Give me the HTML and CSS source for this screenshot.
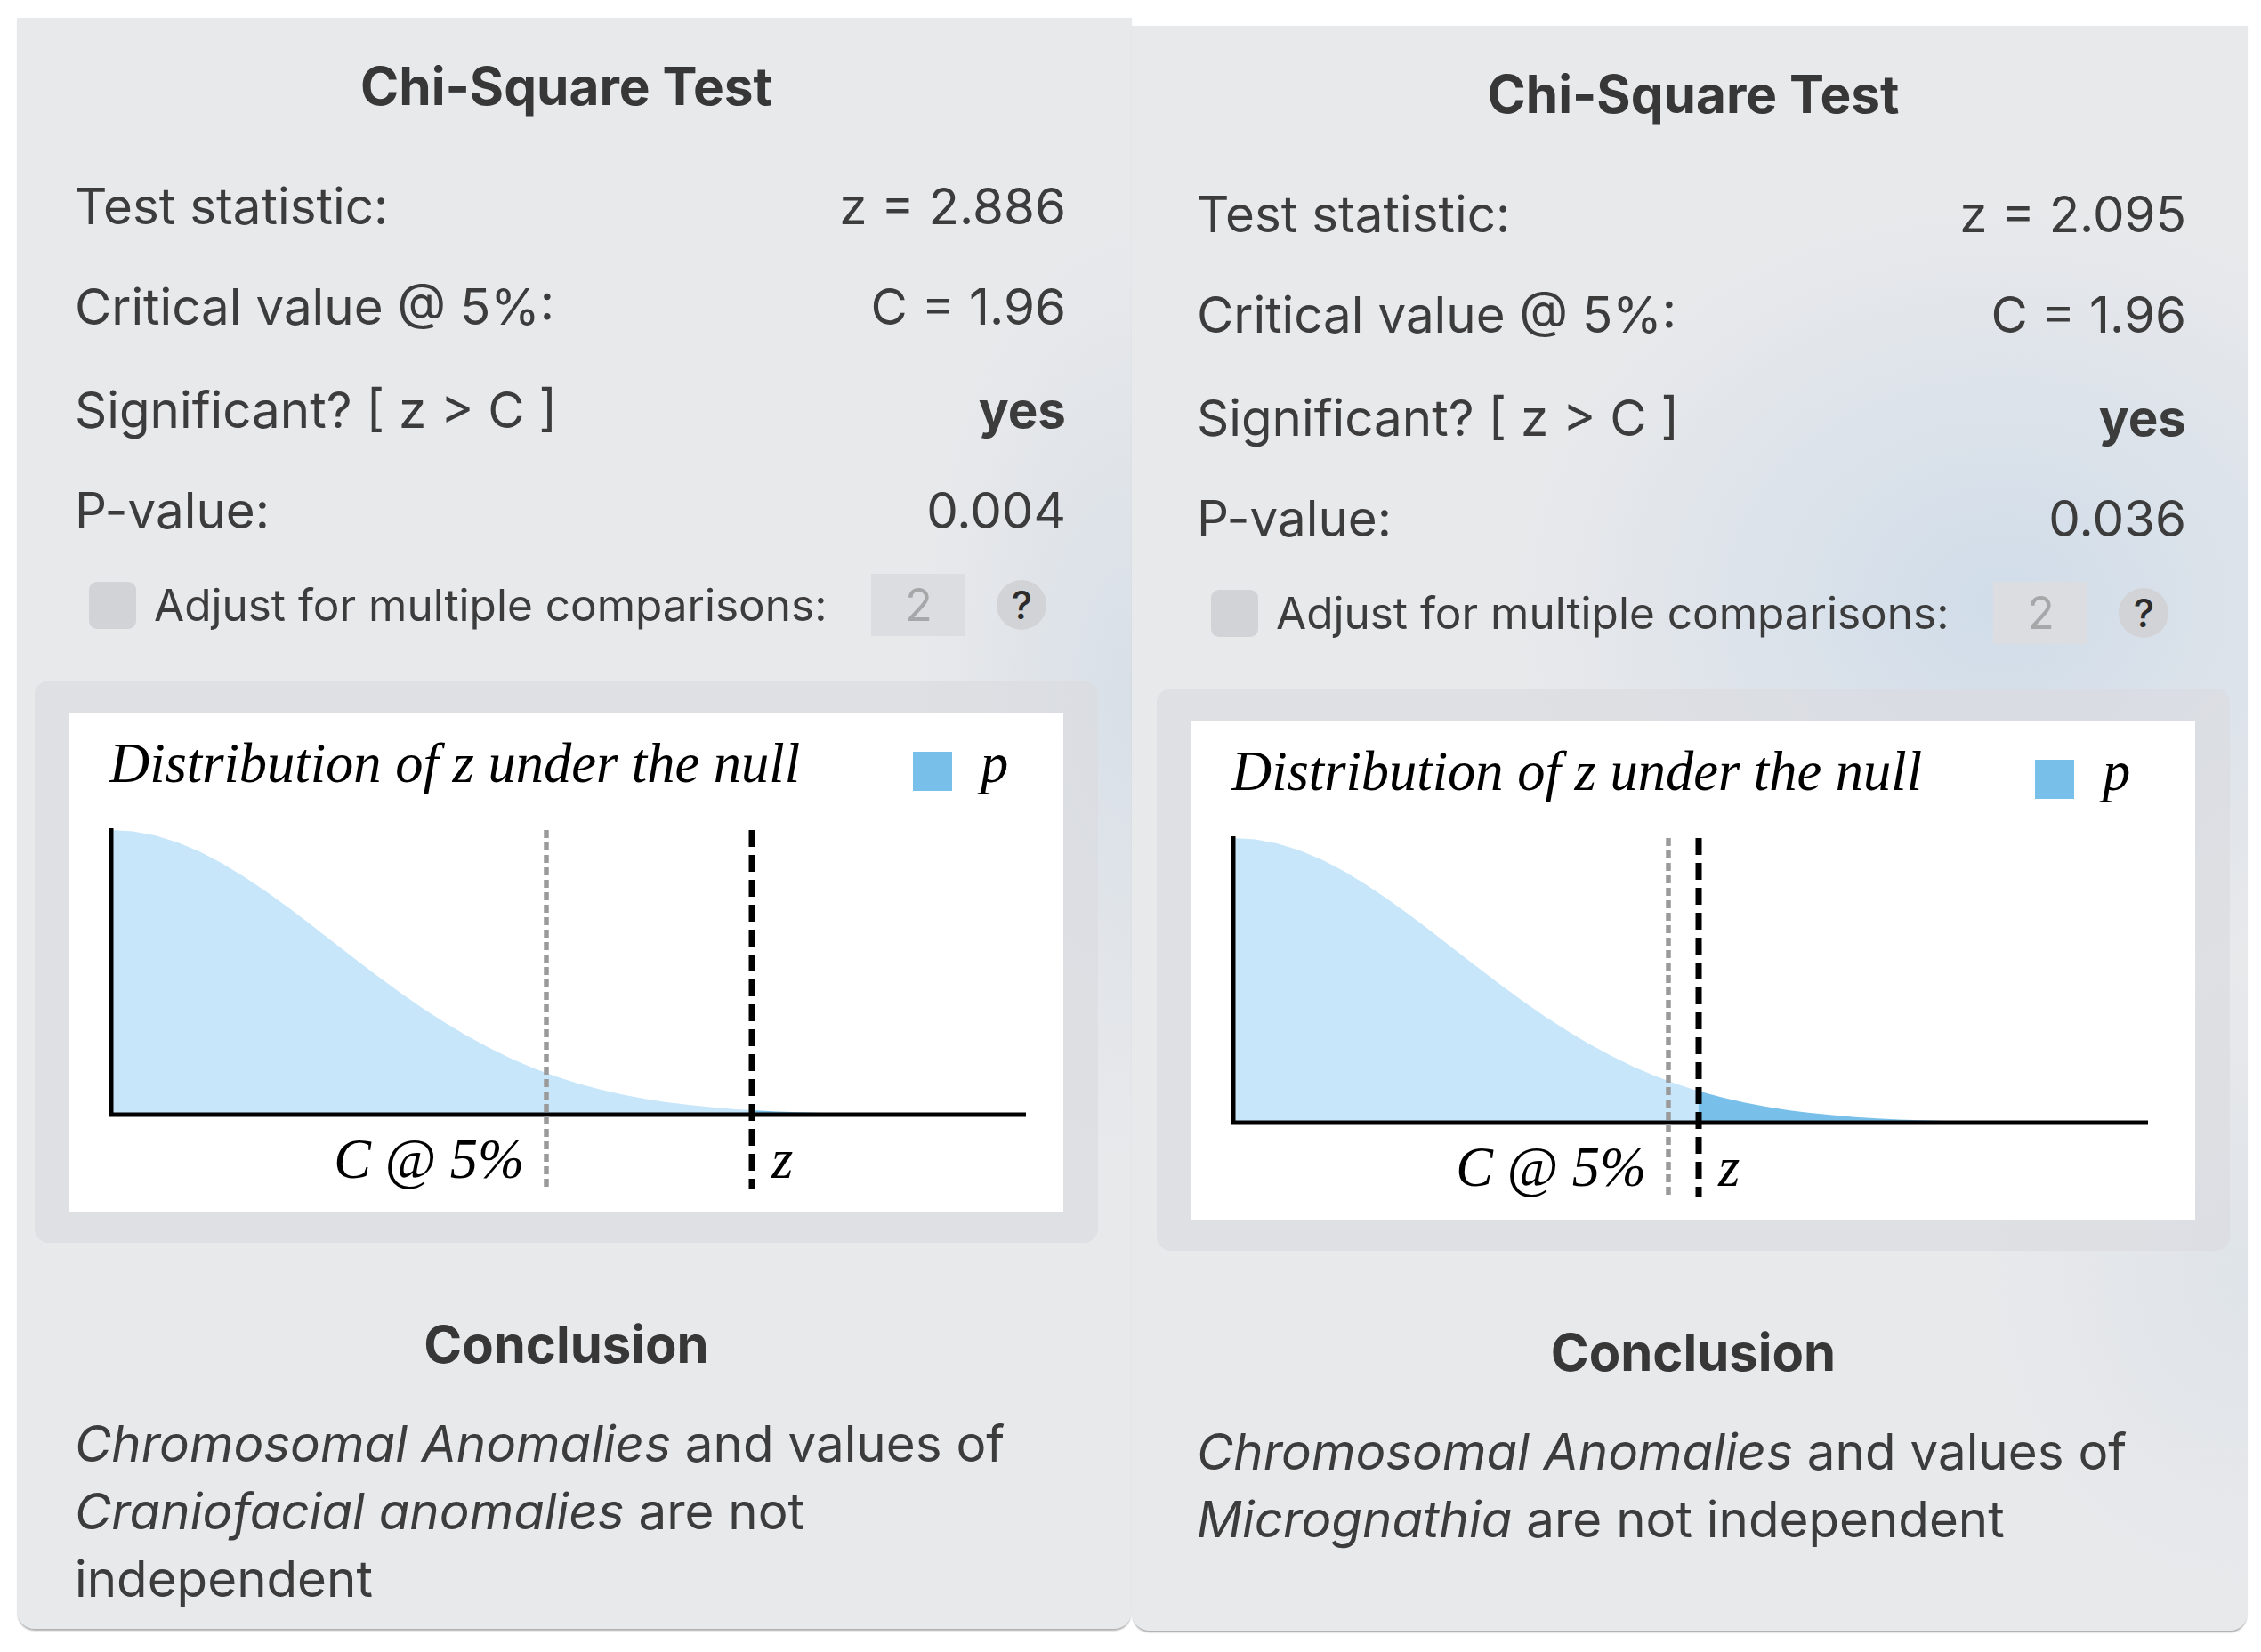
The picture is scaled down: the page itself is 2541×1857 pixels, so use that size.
FILE: index.html
```html
<!DOCTYPE html>
<html lang="en">
<head>
<meta charset="utf-8">
<title>Chi-Square Test</title>
<link rel="stylesheet" href="styles.css">
</head>
<body>
<div class="stage">
  <section class="panel panel--left">
    <h2 class="panel-title">Chi-Square Test</h2>
    <div class="stats">
      <div class="stat-row"><span>Test statistic:</span><span>z = 2.886</span></div>
      <div class="stat-row"><span>Critical value @ 5%:</span><span>C = 1.96</span></div>
      <div class="stat-row"><span>Significant? [ z &gt; C ]</span><span class="strong">yes</span></div>
      <div class="stat-row"><span>P-value:</span><span>0.004</span></div>
    </div>
    <div class="adjust-row">
      <span class="checkbox"></span>
      <span class="adjust-label">Adjust for multiple comparisons:</span>
      <span class="count-input">2</span>
      <span class="help">?</span>
    </div>
    <div class="chart-box">
      <div class="chart">
        <svg class="plot" width="1118" height="561" viewBox="0 0 1118 561">
          <text class="plot-title" x="45" y="78">Distribution of z under the null</text>
          <rect class="legend-swatch" x="948" y="44" width="44" height="44"/>
          <text class="plot-title" x="1024" y="78">p</text>
          <path class="area-null" d="M47,452 L47,132 L71.95,133.6 L96.9,138.3 L121.85,146.1 L146.8,156.6 L171.75,169.6 L196.7,184.7 L221.65,201.5 L246.6,219.6 L271.55,238.6 L296.5,257.9 L321.45,277.3 L346.4,296.2 L371.35,314.5 L396.3,331.9 L421.25,348.1 L446.2,363 L471.15,376.6 L496.1,388.7 L521.05,399.4 L546,408.7 L570.95,416.7 L595.9,423.5 L620.85,429.3 L645.8,434 L670.75,437.9 L695.7,441.1 L720.65,443.6 L745.6,445.7 L767.1,447 L767.1,452 Z"/>
          <path class="area-p" d="M767.1,452 L767.1,447 L770.55,447.2 L795.5,448.4 L845.4,450.1 L895.3,451 L945.2,451.5 L995.1,451.8 L1075,452 Z"/>
          <line class="axis" x1="47" y1="130" x2="47" y2="454"/>
          <line class="axis" x1="45" y1="452" x2="1075" y2="452"/>
          <line class="crit-line" x1="536" y1="132" x2="536" y2="535"/>
          <line class="z-line" x1="767" y1="132" x2="767" y2="535"/>
          <text class="plot-label" x="511" y="523" text-anchor="end">C @ 5%</text>
          <text class="plot-label" x="789" y="523">z</text>
        </svg>
      </div>
    </div>
    <h2 class="conclusion-title">Conclusion</h2>
    <p class="conclusion-text"><em>Chromosomal Anomalies</em> and values of <em>Craniofacial anomalies</em> are not independent</p>
  </section>

  <section class="panel panel--right">
    <h2 class="panel-title">Chi-Square Test</h2>
    <div class="stats">
      <div class="stat-row"><span>Test statistic:</span><span>z = 2.095</span></div>
      <div class="stat-row"><span>Critical value @ 5%:</span><span>C = 1.96</span></div>
      <div class="stat-row"><span>Significant? [ z &gt; C ]</span><span class="strong">yes</span></div>
      <div class="stat-row"><span>P-value:</span><span>0.036</span></div>
    </div>
    <div class="adjust-row">
      <span class="checkbox"></span>
      <span class="adjust-label">Adjust for multiple comparisons:</span>
      <span class="count-input">2</span>
      <span class="help">?</span>
    </div>
    <div class="chart-box">
      <div class="chart">
        <svg class="plot" width="1127" height="561" viewBox="0 0 1127 561">
          <text class="plot-title" x="45" y="78">Distribution of z under the null</text>
          <rect class="legend-swatch" x="948" y="44" width="44" height="44"/>
          <text class="plot-title" x="1024" y="78">p</text>
          <path class="area-null" d="M47,452 L47,132 L71.95,133.6 L96.9,138.3 L121.85,146.1 L146.8,156.6 L171.75,169.6 L196.7,184.7 L221.65,201.5 L246.6,219.6 L271.55,238.6 L296.5,257.9 L321.45,277.3 L346.4,296.2 L371.35,314.5 L396.3,331.9 L421.25,348.1 L446.2,363 L471.15,376.6 L496.1,388.7 L521.05,399.4 L546,408.7 L569.7,416.4 L569.7,452 Z"/>
          <path class="area-p" d="M569.7,452 L569.7,416.4 L570.95,416.7 L595.9,423.5 L620.85,429.3 L645.8,434 L670.75,437.9 L695.7,441.1 L720.65,443.6 L745.6,445.7 L770.55,447.2 L795.5,448.4 L845.4,450.1 L895.3,451 L945.2,451.5 L995.1,451.8 L1075,452 Z"/>
          <line class="axis" x1="47" y1="130" x2="47" y2="454"/>
          <line class="axis" x1="45" y1="452" x2="1075" y2="452"/>
          <line class="crit-line" x1="536" y1="132" x2="536" y2="535"/>
          <line class="z-line" x1="570" y1="132" x2="570" y2="535"/>
          <text class="plot-label" x="511" y="523" text-anchor="end">C @ 5%</text>
          <text class="plot-label" x="592" y="523">z</text>
        </svg>
      </div>
    </div>
    <h2 class="conclusion-title">Conclusion</h2>
    <p class="conclusion-text"><em>Chromosomal Anomalies</em> and values of <em>Micrognathia</em> are not independent</p>
  </section>
</div>
</body>
</html>
```

FILE: styles.css
```css
* {
  box-sizing: border-box;
}

body {
  margin: 0;
  background: #ffffff;
  font-family: Inter, "Liberation Sans", sans-serif;
  color: #3c3c3c;
}

.stage {
  display: flex;
  align-items: flex-start;
  width: 2541px;
  height: 1857px;
  padding-left: 19px;
  overflow: hidden;
}

.panel {
  display: flex;
  flex-direction: column;
  flex: none;
  border-radius: 0 0 20px 20px;
  box-shadow: 0 3px 2px -1px rgba(0, 0, 0, 0.32);
}

.panel--left {
  --row-pad-r: 36px;
  width: 1253px;
  height: 1811px;
  margin-top: 20px;
  padding: 0 38px 0 20px;
  background:
    radial-gradient(ellipse 320px 700px at 100% 42%, rgba(200, 214, 228, 0.5), rgba(200, 214, 228, 0) 75%),
    #e8e9eb;
}

.panel--right {
  --row-pad-r: 49px;
  width: 1254px;
  height: 1804px;
  margin-top: 29px;
  padding: 0 20px 0 28px;
  background:
    radial-gradient(ellipse 760px 620px at 78% 36%, rgba(192, 212, 232, 0.6), rgba(192, 212, 232, 0) 72%),
    radial-gradient(ellipse 420px 500px at 100% 78%, rgba(205, 218, 230, 0.35), rgba(205, 218, 230, 0) 70%),
    #e8e9eb;
}

.panel-title {
  margin: 0;
  padding-top: 41px;
  line-height: 72px;
  font-size: 58.5px;
  font-weight: 700;
  text-align: center;
  color: #373737;
}

.stats {
  margin-top: 42px;
}

.stat-row {
  display: flex;
  justify-content: space-between;
  height: 113px;
  line-height: 113px;
  font-size: 56.5px;
  padding: 0 var(--row-pad-r) 0 45px;
  white-space: nowrap;
}

.stat-row:nth-child(3) {
  margin-top: 3px;
}

.strong {
  font-weight: 700;
}

.adjust-row {
  display: flex;
  align-items: center;
  height: 70px;
  margin-top: 15px;
  padding-left: 61px;
}

.checkbox {
  flex: none;
  width: 53px;
  height: 53px;
  border-radius: 9px;
  background: #d2d3d6;
}

.adjust-label {
  margin-left: 20px;
  font-size: 49.5px;
  white-space: nowrap;
}

.count-input {
  flex: none;
  display: flex;
  align-items: center;
  justify-content: center;
  width: 106px;
  height: 70px;
  margin-left: 50px;
  background: #dcdde0;
  color: #a6a7a9;
  font-size: 50px;
}

.help {
  flex: none;
  display: flex;
  align-items: center;
  justify-content: center;
  width: 56px;
  height: 56px;
  margin-left: 35px;
  border-radius: 50%;
  background: #d2d3d6;
  color: #2c2c2c;
  font-size: 44px;
  font-weight: 500;
}

.chart-box {
  margin-top: 50px;
  padding: 36px 39px 35px 39px;
  border-radius: 16px;
  background: rgba(218, 220, 223, 0.7);
}

.chart {
  height: 561px;
  background: #ffffff;
}

.plot {
  display: block;
}

.plot-title,
.plot-label {
  font-family: "Liberation Serif", "Times New Roman", serif;
  font-style: italic;
  font-size: 62.5px;
  fill: #000000;
}

.legend-swatch {
  fill: #78bfea;
}

.area-null {
  fill: #c8e6fa;
}

.area-p {
  fill: #78bfea;
}

.axis {
  stroke: #000000;
  stroke-width: 5;
}

.crit-line {
  stroke: #9a9a9a;
  stroke-width: 5.5;
  stroke-dasharray: 9 5;
}

.z-line {
  stroke: #000000;
  stroke-width: 7;
  stroke-dasharray: 19 9;
}

.conclusion-title {
  margin: 78px 0 0;
  line-height: 72px;
  font-size: 58px;
  font-weight: 700;
  text-align: center;
  color: #373737;
}

.conclusion-text {
  margin: 38px 0 0;
  padding: 0 var(--row-pad-r) 0 45px;
  font-size: 56.5px;
  line-height: 76px;
}

.conclusion-text em {
  font-style: italic;
}
```
